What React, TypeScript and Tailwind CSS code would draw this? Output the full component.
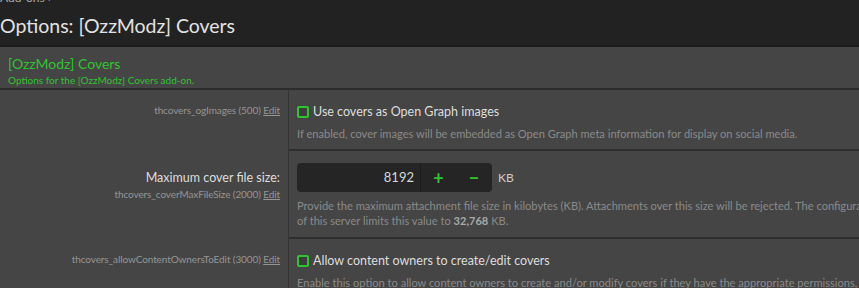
import React from "react";

const Check = () => (
  <span className="inline-block w-[12px] h-[12px] border-2 border-[#2fc42f] rounded-[2px] bg-[#3d3d3d] shrink-0" />
);

const Hint = ({ name }: { name: string }) => (
  <div className="text-[10px] tracking-[-0.1px] text-[#959595] leading-[14px]">
    {name} <span className="underline">Edit</span>
  </div>
);

export default function App() {
  return (
    <div className="w-[859px] h-[288px] overflow-hidden bg-[#222222] font-['Lato','Open_Sans',sans-serif]">
      <div className="h-[45px] overflow-hidden">
        <div className="mt-[-8px] text-[12px] leading-[12px] text-[#aaaaaa]">Add-ons ›</div>
        <h1 className="mt-[9px] text-[19.5px] leading-[26px] text-[#e2e2e2]">Options: [OzzModz] Covers</h1>
      </div>
      <div className="border-t-2 border-b-2 border-t-[#1a1a1a] border-b-[#2c2c2c] bg-[#454545] h-[45px] px-[8px] pt-[7px]">
        <div className="text-[14px] leading-[19px] text-[#2fc42f]">[OzzModz] Covers</div>
        <div className="text-[10px] leading-[14px] text-[#2fc42f]">Options for the [OzzModz] Covers add-on.</div>
      </div>
      <div className="bg-[#454545]">
        <div className="flex h-[61px]">
          <div className="w-[289px] shrink-0 border-r border-[#333] text-right pr-[8px] pt-[13px]">
            <Hint name="thcovers_ogImages (500)" />
          </div>
          <div className="flex-1 border-b-2 border-[#2e2e2e] pl-[8px] pt-[13px]">
            <div className="flex items-center gap-[4px]">
              <Check />
              <span className="text-[12.5px] leading-[18px] text-[#dddddd]">Use covers as Open Graph images</span>
            </div>
            <div className="mt-[5px] text-[11.1px] leading-[15px] text-[#8a8a8a] whitespace-nowrap">
              If enabled, cover images will be embedded as Open Graph meta information for display on social media.
            </div>
          </div>
        </div>
        <div className="flex h-[88px]">
          <div className="w-[289px] shrink-0 border-r border-[#333] text-right pr-[8px] pt-[18px]">
            <div className="text-[12.5px] leading-[18px] text-[#dddddd]">Maximum cover file size:</div>
            <Hint name="thcovers_coverMaxFileSize (2000)" />
          </div>
          <div className="flex-1 border-b-2 border-[#2e2e2e] pl-[8px] pt-[12px]">
            <div className="flex items-center">
              <div className="flex w-[195px] h-[29px] rounded-[4px] bg-[#252525] overflow-hidden">
                <div className="w-[124px] border-r border-[#1c1c1c] text-right pr-[6px] text-[13px] leading-[29px] text-[#d8d8d8]">8192</div>
                <div className="w-[35px] flex items-center justify-center text-[#2fc42f] text-[18px] font-bold leading-none">+</div>
                <div className="w-[36px] flex items-center justify-center text-[#2fc42f] text-[18px] font-bold leading-none">−</div>
              </div>
              <span className="ml-[6px] text-[12px] text-[#cccccc]">KB</span>
            </div>
            <div className="mt-[6px] text-[11.1px] leading-[15px] text-[#8a8a8a] whitespace-nowrap">
              Provide the maximum attachment file size in kilobytes (KB). Attachments over this size will be rejected. The configuration
              <br />
              of this server limits this value to <b className="text-[#a8a8a8]">32,768</b> KB.
            </div>
          </div>
        </div>
        <div className="flex h-[60px]">
          <div className="w-[289px] shrink-0 border-r border-[#333] text-right pr-[8px] pt-[13px]">
            <Hint name="thcovers_allowContentOwnersToEdit (3000)" />
          </div>
          <div className="flex-1 pl-[8px] pt-[13px]">
            <div className="flex items-center gap-[4px]">
              <Check />
              <span className="text-[12.5px] leading-[18px] text-[#dddddd]">Allow content owners to create/edit covers</span>
            </div>
            <div className="mt-[5px] text-[11.1px] leading-[15px] text-[#8a8a8a] whitespace-nowrap">
              Enable this option to allow content owners to create and/or modify covers if they have the appropriate permissions,
            </div>
          </div>
        </div>
      </div>
    </div>
  );
}
